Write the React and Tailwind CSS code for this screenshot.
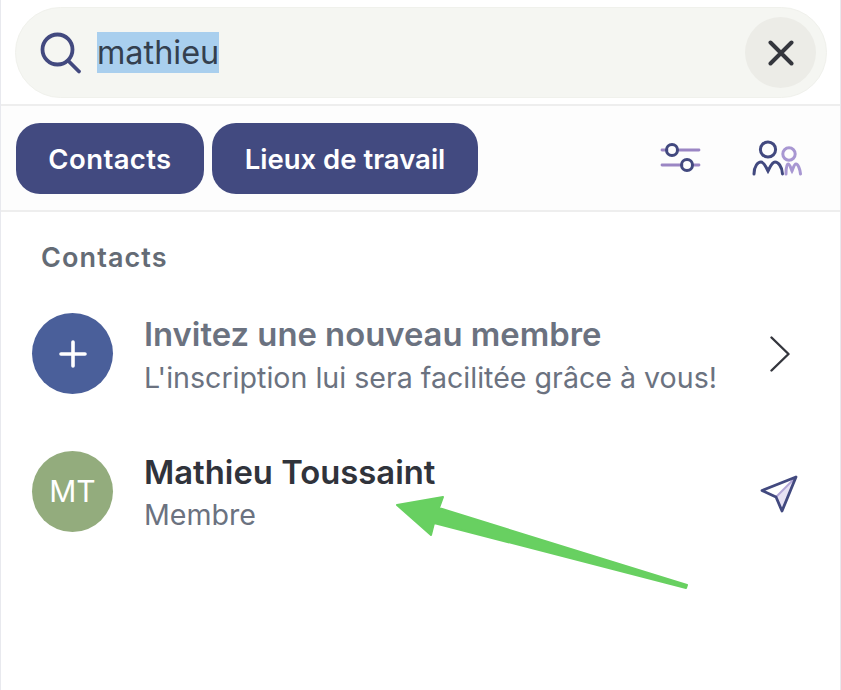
import React from "react";

const FONT = "font-['Inter',sans-serif]";

const SearchIcon = () => (
  <svg width="44" height="44" viewBox="0 0 44 44" fill="none" stroke="#42497f" strokeWidth="3.8" strokeLinecap="round">
    <circle cx="18.5" cy="18.5" r="15" />
    <path d="M29.5 30 L40 40.5" />
  </svg>
);

const CloseIcon = () => (
  <svg width="26" height="26" viewBox="0 0 26 26" fill="none" stroke="#34363d" strokeWidth="4" strokeLinecap="round">
    <path d="M2.5 2.5 L23.5 23.5 M23.5 2.5 L2.5 23.5" />
  </svg>
);

const FilterIcon = () => (
  <svg width="42" height="32" viewBox="0 0 42 32" fill="none" strokeWidth="2.8" strokeLinecap="round">
    <path d="M2 8 H7 M18 8 H39 M2 23 H22 M33 23 H39" stroke="#9b86c4" />
    <circle cx="12" cy="8" r="5.5" stroke="#42497f" strokeWidth="3" />
    <circle cx="27" cy="23" r="5.5" stroke="#42497f" strokeWidth="3" />
  </svg>
);

const PeopleIcon = () => (
  <svg width="50" height="36" viewBox="0 0 50 36" fill="none" strokeWidth="3" strokeLinecap="round">
    <circle cx="37" cy="14" r="6.2" stroke="#a897d2" />
    <path d="M34 34 C34 27 35 24 36 24 C38 24 39 29 40 31 C41 29 42 24 44 24 C46 24 48 29 48.5 34" stroke="#a897d2" />
    <circle cx="16" cy="9.5" r="7.6" stroke="#42497f" />
    <path d="M2 34 C2 26 6 22 9 22 C12 22 14 27 16 31 C18 27 20 22 23 22 C26 22 30 26 30.5 34" stroke="#42497f" />
  </svg>
);

const ChevronIcon = () => (
  <svg width="20" height="36" viewBox="0 0 20 36" fill="none" stroke="#34363d" strokeWidth="2.4" strokeLinecap="round" strokeLinejoin="round">
    <path d="M1.5 1.5 L18.5 18 L1.5 34.5" />
  </svg>
);

const SendIcon = () => (
  <svg className="mt-[5px]" width="38" height="38" viewBox="0 0 38 38" fill="none" strokeWidth="2.8" strokeLinejoin="round" strokeLinecap="round">
    <path d="M36 2 L16 22 L22 36 Z" fill="#e6e1f3" stroke="none" />
    <path d="M36 2 L16 22" stroke="#b3a6d8" strokeWidth="2" />
    <path d="M36 2 L2 15.5 L16 22 L22 36 Z" stroke="#42497f" />
  </svg>
);

const Row = ({ avatar, avatarClass, title, titleClass, subtitle, action, rowClass }) => (
  <div className={`flex items-start pl-[31px] ${rowClass}`}>
    <div className={`w-[81px] h-[81px] rounded-full flex items-center justify-center text-white shrink-0 ${avatarClass}`}>
      {avatar}
    </div>
    <div className="ml-[31px] flex-1 min-w-0 mt-[1px]">
      <div className={`text-[32.8px] leading-[40px] font-[560] whitespace-nowrap ${titleClass}`}>{title}</div>
      <div className="text-[28.6px] leading-[40px] text-[#6b7280] whitespace-nowrap mt-[3.5px]">{subtitle}</div>
    </div>
    <div className="h-[81px] flex items-center">{action}</div>
  </div>
);

export default function App() {
  return (
    <div className={`relative w-[841px] h-[690px] overflow-hidden bg-white border-x border-[#e8e9ee] ${FONT}`}>
      {/* Search */}
      <div className="h-[106px] pt-[7px] pl-[14px] pr-[13px] border-b-2 border-[#eeeeee]">
        <div className="h-[91px] rounded-full bg-[#f5f6f2] border border-[#f0f1ec] flex items-center pl-[23px] pr-[10px]">
          <SearchIcon />
          <span className="ml-[14px] h-[41px] w-[122px] bg-[#a9cfee] text-[32.4px] leading-[41px] text-[#34404f] whitespace-nowrap">mathieu</span>
          <div className="ml-auto w-[71px] h-[71px] rounded-full bg-[#ecece7] flex items-center justify-center">
            <CloseIcon />
          </div>
        </div>
      </div>

      {/* Tabs */}
      <div className="h-[106px] flex items-center pl-[15px] border-b-2 border-[#eeeeee] bg-[#fdfdfd]">
        <button className="w-[188px] h-[71px] pt-[3px] rounded-[24px] bg-[#424a80] text-white text-[27.5px] tracking-[0.4px] font-semibold">Contacts</button>
        <button className="ml-[8px] w-[266px] h-[71px] pt-[3px] rounded-[24px] bg-[#424a80] text-white text-[27.5px] font-semibold">Lieux de travail</button>
        <div className="ml-auto flex items-center mr-[38px] gap-[50px]">
          <FilterIcon />
          <PeopleIcon />
        </div>
      </div>

      <div className="pt-[28px]">
        <div className="pl-[40px] text-[27px] leading-[36px] font-semibold tracking-[1.1px] text-[#646b75]">Contacts</div>
        <Row
          rowClass="mt-[37px] pr-[50px]"
          avatarClass="bg-[#4a5f9a]"
          avatar={
            <svg width="28" height="28" viewBox="0 0 28 28" stroke="#ffffff" strokeWidth="3.6" strokeLinecap="round">
              <path d="M14 2 V26 M2 14 H26" />
            </svg>
          }
          title="Invitez une nouveau membre"
          titleClass="text-[#6b7280]"
          subtitle="L'inscription lui sera facilitée grâce à vous!"
          action={<ChevronIcon />}
        />
        <Row
          rowClass="mt-[53px] pr-[42px]"
          avatarClass="bg-[#93ac7d] text-[30px] pt-[1px]"
          avatar="MT"
          title="Mathieu Toussaint"
          titleClass="text-[#30333b]"
          subtitle="Membre"
          action={<SendIcon />}
        />
      </div>

      {/* Annotation arrow */}
      <svg className="absolute left-0 top-0" width="841" height="690" viewBox="0 0 841 690">
        <path
          d="M396 505 L442 497 L438 508 L686 585 L685 588 L433 523 L430 535 Z"
          fill="#68d061"
          stroke="#68d061"
          strokeWidth="2"
          strokeLinejoin="round"
        />
      </svg>
    </div>
  );
}
